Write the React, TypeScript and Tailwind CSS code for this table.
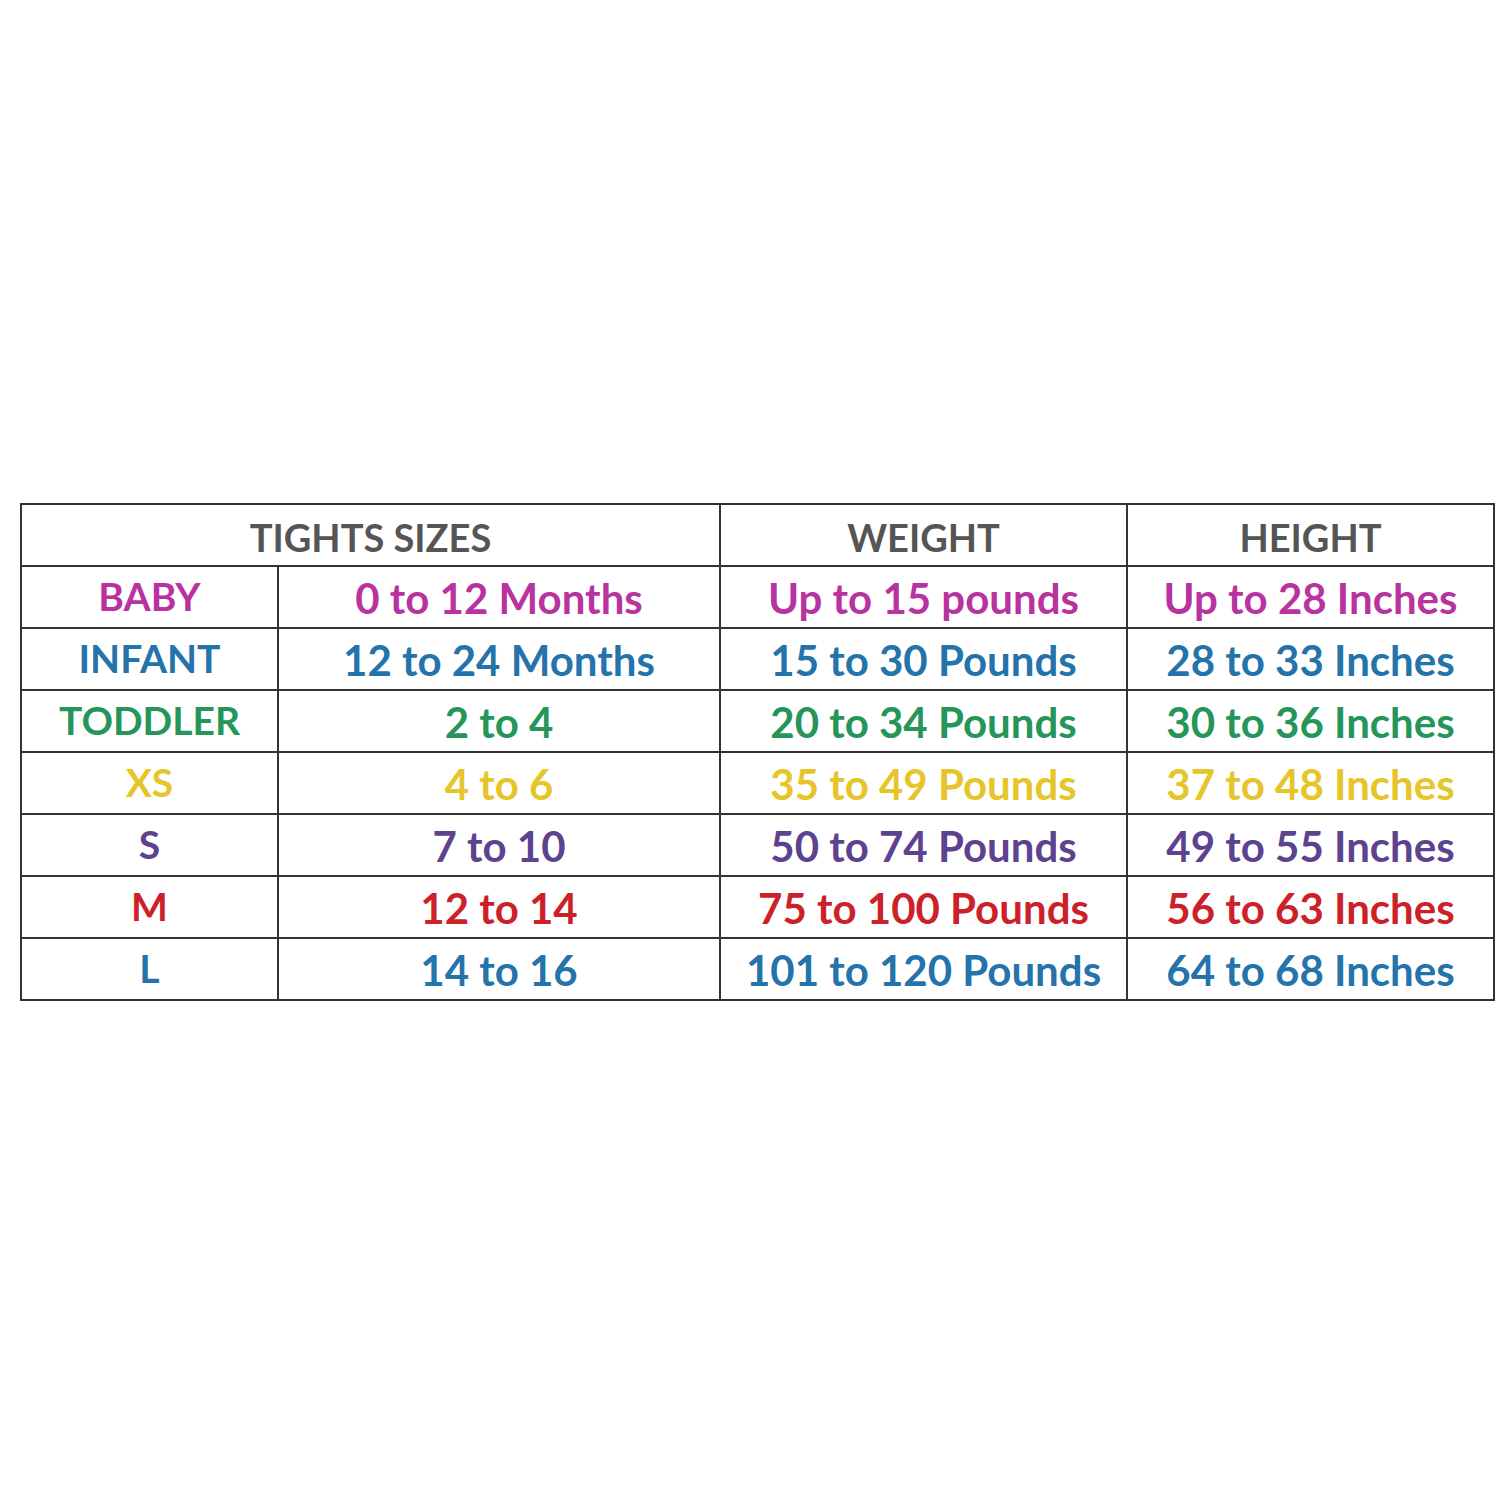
const COLORS = {
  pink: 'text-[#b8339f]',
  blue: 'text-[#2473ab]',
  green: 'text-[#26955a]',
  yellow: 'text-[#e6c52a]',
  purple: 'text-[#5d4290]',
  red: 'text-[#cc2128]',
};

const rows = [
  { size: 'BABY', age: '0 to 12 Months', weight: 'Up to 15 pounds', height: 'Up to 28 Inches', color: COLORS.pink },
  { size: 'INFANT', age: '12 to 24 Months', weight: '15 to 30 Pounds', height: '28 to 33 Inches', color: COLORS.blue },
  { size: 'TODDLER', age: '2 to 4', weight: '20 to 34 Pounds', height: '30 to 36 Inches', color: COLORS.green },
  { size: 'XS', age: '4 to 6', weight: '35 to 49 Pounds', height: '37 to 48 Inches', color: COLORS.yellow },
  { size: 'S', age: '7 to 10', weight: '50 to 74 Pounds', height: '49 to 55 Inches', color: COLORS.purple },
  { size: 'M', age: '12 to 14', weight: '75 to 100 Pounds', height: '56 to 63 Inches', color: COLORS.red },
  { size: 'L', age: '14 to 16', weight: '101 to 120 Pounds', height: '64 to 68 Inches', color: COLORS.blue },
];

const cell = 'border-2 border-[#333] text-center p-0 align-middle';

export default function App() {
  return (
    <div className="w-[1500px] h-[1500px] bg-white flex flex-col pt-[503px] pl-[20px]" style={{ fontFamily: 'Lato, "Open Sans", sans-serif' }}>
      <table className="border-collapse w-[1473px] table-fixed font-bold leading-none">
        <colgroup>
          <col className="w-[257px]" />
          <col className="w-[442px]" />
          <col className="w-[407px]" />
          <col className="w-[367px]" />
        </colgroup>
        <thead>
          <tr className="h-[62px] text-[#555] text-[38px]">
            <th colSpan={2} className={`${cell} pt-[4px]`}>TIGHTS SIZES</th>
            <th className={`${cell} pt-[4px]`}>WEIGHT</th>
            <th className={`${cell} pt-[4px]`}>HEIGHT</th>
          </tr>
        </thead>
        <tbody>
          {rows.map((r) => (
            <tr key={r.size} className={`h-[62px] text-[42px] ${r.color}`}>
              <td className={`${cell} text-[39px] pb-[2px]`}>{r.size}</td>
              <td className={`${cell} pt-[2px]`}>{r.age}</td>
              <td className={`${cell} pt-[2px]`}>{r.weight}</td>
              <td className={`${cell} pt-[2px]`}>{r.height}</td>
            </tr>
          ))}
        </tbody>
      </table>
    </div>
  );
}
